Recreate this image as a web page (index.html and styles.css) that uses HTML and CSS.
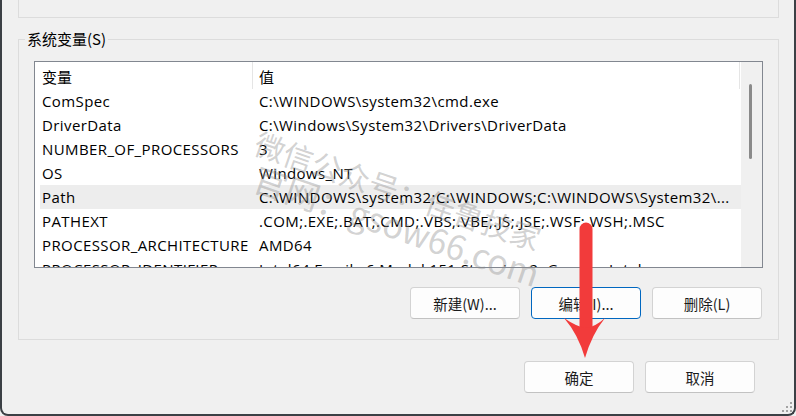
FILE: index.html
```html
<!DOCTYPE html>
<html lang="zh-CN">
<head>
    <meta charset="UTF-8">
    <title>环境变量</title>
    <link rel="stylesheet" href="styles.css">
</head>
<body>
    <div class="window">
        <div class="user-group"></div>

        <fieldset class="group">
            <legend>系统变量(S)</legend>

            <div class="list">
                <div class="list-body">
                    <div class="list-head">
                        <div class="head-name">变量</div>
                        <div class="head-value">值</div>
                    </div>
                    <div class="row"><span class="cell-name">ComSpec</span><span class="cell-value">C:\WINDOWS\system32\cmd.exe</span></div>
                    <div class="row"><span class="cell-name">DriverData</span><span class="cell-value">C:\Windows\System32\Drivers\DriverData</span></div>
                    <div class="row"><span class="cell-name">NUMBER_OF_PROCESSORS</span><span class="cell-value">3</span></div>
                    <div class="row"><span class="cell-name">OS</span><span class="cell-value">Windows_NT</span></div>
                    <div class="row selected"><span class="cell-name">Path</span><span class="cell-value">C:\WINDOWS\system32;C:\WINDOWS;C:\WINDOWS\System32\...</span></div>
                    <div class="row"><span class="cell-name">PATHEXT</span><span class="cell-value">.COM;.EXE;.BAT;.CMD;.VBS;.VBE;.JS;.JSE;.WSF;.WSH;.MSC</span></div>
                    <div class="row"><span class="cell-name">PROCESSOR_ARCHITECTURE</span><span class="cell-value">AMD64</span></div>
                    <div class="row"><span class="cell-name">PROCESSOR_IDENTIFIER</span><span class="cell-value">Intel64 Family 6 Model 151 Stepping 2, GenuineIntel</span></div>
                </div>
                <div class="scrollbar"><div class="thumb"></div></div>
            </div>

            <div class="actions">
                <button class="btn">新建(W)...</button>
                <button class="btn focused">编辑(I)...</button>
                <button class="btn">删除(L)</button>
            </div>
        </fieldset>

        <div class="footer">
            <button class="btn">确定</button>
            <button class="btn">取消</button>
        </div>
    </div>

    <!-- resize grip -->
    <svg class="grip" width="14" height="14" viewBox="0 0 14 14">
        <g fill="#a3a3a3">
            <rect x="10" y="2" width="2" height="2"/>
            <rect x="6" y="6" width="2" height="2"/>
            <rect x="10" y="6" width="2" height="2"/>
            <rect x="2" y="10" width="2" height="2"/>
            <rect x="6" y="10" width="2" height="2"/>
            <rect x="10" y="10" width="2" height="2"/>
        </g>
    </svg>

    <div class="watermark">
        <div class="wm-line">微信公众号：佳鲁技家</div>
        <div class="wm-line wm-site">官网：gsow66.com</div>
    </div>

    <!-- red pointer down to the OK button -->
    <svg class="pointer" width="796" height="416" viewBox="0 0 796 416">
        <line x1="586" y1="229" x2="586" y2="326" stroke="#f23b3b" stroke-width="13" stroke-linecap="round"/>
        <path d="M564 318 Q577 327 586 328 Q595 327 605 318 Q592 334 585 358 Q578 334 564 318 Z" fill="#f23b3b"/>
    </svg>
</body>
</html>
```

FILE: styles.css
```css
body {
    margin: 0;
    width: 796px;
    height: 416px;
    position: relative;
    overflow: hidden;
    background: #f0f0f0;
    font-family: "Open Sans", "Noto Sans CJK SC", sans-serif;
    font-size: 15px;
    color: #000;
}
.window {
    box-sizing: border-box;
    width: 796px;
    height: 416px;
    border: 2px solid #3b4045;
    border-top: none;
    border-radius: 0 0 8px 8px;
    background: #f0f0f0;
}
.user-group {
    box-sizing: border-box;
    height: 18px;
    margin: 0 15px 0 16px;
    border: 1px solid #dcdcdc;
    border-top: none;
}
.group {
    margin: 13px 15px 0 16px;
    padding: 0 15px 20px 15px;
    border: 1px solid #dcdcdc;
    min-width: 0;
}
.group legend {
    padding: 0 2px;
    margin-left: -9px;
    line-height: 16px;
    font-family: "Noto Sans CJK SC", sans-serif;
}
.list {
    box-sizing: border-box;
    height: 207px;
    margin-top: 14px;
    border: 1px solid #828790;
    background: #fff;
    display: flex;
}
.list-body {
    flex: 1;
    overflow: hidden;
}
.list-head {
    display: flex;
    height: 27px;
    line-height: 29px;
}
.head-name {
    box-sizing: border-box;
    width: 218px;
    padding-left: 7px;
    border-right: 1px solid #e5e5e5;
    font-family: "Noto Sans CJK SC", sans-serif;
}
.head-value {
    flex: 1;
    padding-left: 6px;
    margin-right: 1px;
    border-right: 1px solid #e5e5e5;
    font-family: "Noto Sans CJK SC", sans-serif;
}
.row {
    display: flex;
    height: 24px;
    line-height: 24px;
    margin-left: 5px;
    white-space: nowrap;
    letter-spacing: 0.4px;
}
.row.selected {
    background: #ededed;
}
.cell-name {
    box-sizing: border-box;
    width: 217px;
    flex: none;
    padding-left: 2px;
    overflow: hidden;
}
.cell-value {
    padding-left: 2px;
    overflow: hidden;
}
.scrollbar {
    width: 21px;
    background: #f0f0f0;
    padding-top: 22px;
}
.thumb {
    width: 3px;
    height: 75px;
    margin-left: 8px;
    border-radius: 2px;
    background: #8a8a8a;
}
.actions {
    display: flex;
    justify-content: flex-end;
    gap: 11px;
    margin-top: 19px;
    padding-right: 1px;
}
.btn {
    box-sizing: border-box;
    width: 110px;
    height: 32px;
    padding: 0;
    border: 1px solid #d3d3d3;
    border-bottom-color: #c2c2c2;
    border-radius: 4px;
    background: #fdfdfd;
    font-family: "Noto Sans CJK SC", sans-serif;
    font-size: 14.5px;
    color: #1b1b1b;
}
.btn.focused {
    border-color: #0067c0;
}
.footer {
    display: flex;
    justify-content: flex-end;
    gap: 11px;
    margin-top: 21px;
    padding-right: 39px;
}
.grip {
    position: absolute;
    right: 2px;
    bottom: 2px;
}
.watermark {
    position: absolute;
    left: 262px;
    top: 125px;
    transform: rotate(19deg);
    transform-origin: 0 0;
    color: rgba(140, 140, 140, 0.4);
    font-family: "Noto Sans CJK SC", sans-serif;
    font-size: 30px;
    line-height: 34px;
    white-space: nowrap;
    pointer-events: none;
}
.wm-site {
    font-size: 34px;
    margin-left: 10px;
}
.pointer {
    position: absolute;
    left: 0;
    top: 0;
    pointer-events: none;
}
```
